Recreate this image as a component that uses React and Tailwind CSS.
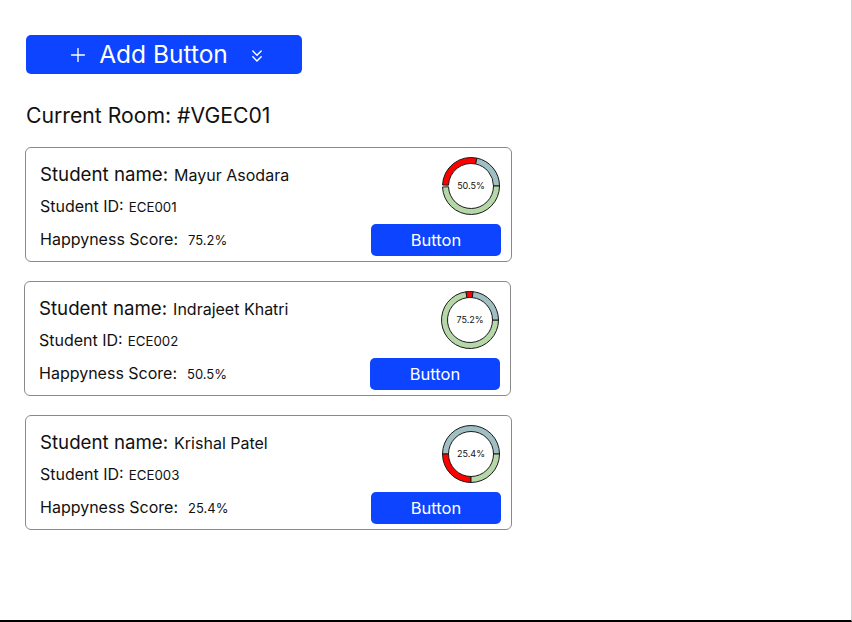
import React from "react";
import { Plus, ChevronsDown } from "lucide-react";

const C = { red: "#ff0000", gray: "#9fbfc2", green: "#b6d7a8" };

function pt(cx, cy, r, deg) {
  const a = ((deg - 90) * Math.PI) / 180;
  return [cx + r * Math.cos(a), cy + r * Math.sin(a)];
}

function sector(cx, cy, R, r, a1, a2) {
  const large = a2 - a1 > 180 ? 1 : 0;
  const [x1, y1] = pt(cx, cy, R, a1);
  const [x2, y2] = pt(cx, cy, R, a2);
  const [x3, y3] = pt(cx, cy, r, a2);
  const [x4, y4] = pt(cx, cy, r, a1);
  return `M${x1} ${y1} A${R} ${R} 0 ${large} 1 ${x2} ${y2} L${x3} ${y3} A${r} ${r} 0 ${large} 0 ${x4} ${y4} Z`;
}

function Donut({ label, segs }) {
  return (
    <div className="relative w-[60px] h-[60px]">
      <svg width="60" height="60" viewBox="0 0 60 60">
        {segs.map((s, i) => (
          <path key={i} d={sector(30, 30, 28.5, 22.5, s[0], s[1])} fill={s[2]} stroke="#1a1a1a" strokeWidth="1" />
        ))}
      </svg>
      <div className="absolute inset-0 flex items-center justify-center text-[9px] text-[#111]">{label}</div>
    </div>
  );
}

function Card({ name, id, score, donutLabel, segs, extra = "" }) {
  return (
    <div className={`w-[487px] h-[115px] border border-[#8a8a8a] rounded-[6px] flex justify-between pl-[14px] pr-[10px] ${extra}`}>
      <div className="flex flex-col pt-[13px] text-[#111]">
        <div className="flex items-baseline h-[26px]">
          <span className="text-[18.7px]">Student name:</span>
          <span className="text-[16px] ml-[6px]">{name}</span>
        </div>
        <div className="flex items-baseline h-[32px] pt-[7px]">
          <span className="text-[16px]">Student ID:</span>
          <span className="text-[13.3px] ml-[5px]">{id}</span>
        </div>
        <div className="flex items-baseline h-[32px] pt-[8px]">
          <span className="text-[16px]">Happyness Score:</span>
          <span className="text-[13px] ml-[10px]">{score}</span>
        </div>
      </div>
      <div className="flex flex-col items-end pt-[8px]">
        <Donut label={donutLabel} segs={segs} />
        <button className="mt-[8px] w-[130px] h-[32px] rounded-[5px] bg-[#0c44ff] text-white text-[16.5px] flex items-center justify-center">
          Button
        </button>
      </div>
    </div>
  );
}

export default function App() {
  return (
    <div
      className="w-[852px] h-[622px] bg-white border-b-2 border-black border-r border-r-[#d0d0d0] pl-[25px] pt-[35px] box-border"
      style={{ fontFamily: "Inter, 'Noto Sans', sans-serif" }}
    >
      <button className="ml-[1px] w-[276px] h-[39px] rounded-[5px] bg-[#0c44ff] text-white flex items-center justify-center pl-[6px]">
        <Plus size={22} strokeWidth={1.5} />
        <span className="text-[24.5px] ml-[10px] leading-none">Add Button</span>
        <ChevronsDown size={20} strokeWidth={1.75} className="ml-[19px] mt-[2px]" />
      </button>
      <div className="ml-[1px] mt-[27px] text-[21.2px] text-[#111] leading-[28px]">Current Room: #VGEC01</div>
      <div className="mt-[18px] flex flex-col gap-[19px]">
        <Card
          name="Mayur Asodara"
          id="ECE001"
          score="75.2%"
          donutLabel="50.5%"
          segs={[
            [272, 372, C.red],
            [372, 450, C.gray],
            [90, 268, C.green],
          ]}
        />
        <Card
          extra="-ml-[1px]"
          name="Indrajeet Khatri"
          id="ECE002"
          score="50.5%"
          donutLabel="75.2%"
          segs={[
            [90, 352, C.green],
            [352, 366, C.red],
            [366, 450, C.gray],
          ]}
        />
        <Card
          name="Krishal Patel"
          id="ECE003"
          score="25.4%"
          donutLabel="25.4%"
          segs={[
            [270, 450, C.gray],
            [180, 270, C.red],
            [90, 180, C.green],
          ]}
        />
      </div>
    </div>
  );
}
